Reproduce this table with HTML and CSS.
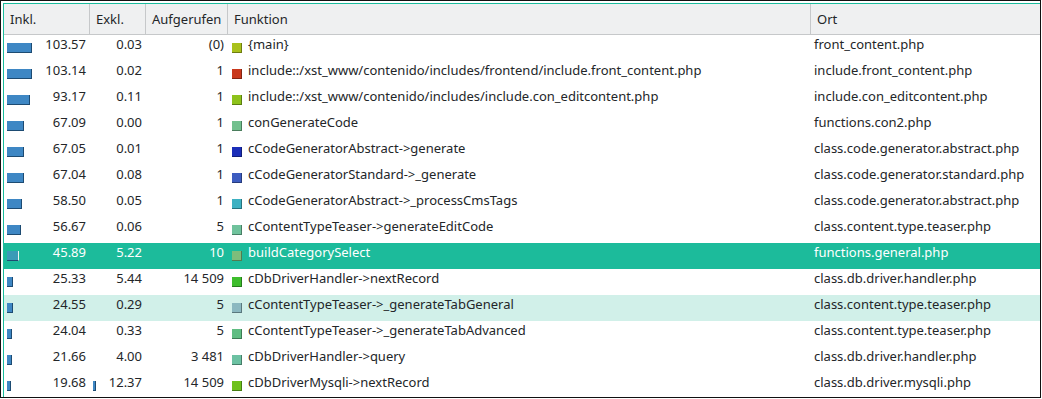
FILE: index.html
```html
<!DOCTYPE html>
<html lang="de">
<head>
    <meta charset="UTF-8">
    <title>Aufrufliste</title>
    <link rel="stylesheet" href="styles.css">
</head>
<body>
    <div class="frame">
        <div class="list">
            <div class="row head">
                <div class="cell">Inkl.</div>
                <div class="cell">Exkl.</div>
                <div class="cell">Aufgerufen</div>
                <div class="cell">Funktion</div>
                <div class="cell">Ort</div>
            </div>

            <div class="row">
                <div class="cell incl"><span class="bar" style="width:25px"></span><span class="num">103.57</span></div>
                <div class="cell num">0.03</div>
                <div class="cell num">(0)</div>
                <div class="cell fn"><span class="sq" style="background:#a9c11b"></span>{main}</div>
                <div class="cell">front_content.php</div>
            </div>
            <div class="row">
                <div class="cell incl"><span class="bar" style="width:25px"></span><span class="num">103.14</span></div>
                <div class="cell num">0.02</div>
                <div class="cell num">1</div>
                <div class="cell fn"><span class="sq" style="background:#c9381c"></span>include::/xst_www/contenido/includes/frontend/include.front_content.php</div>
                <div class="cell">include.front_content.php</div>
            </div>
            <div class="row">
                <div class="cell incl"><span class="bar" style="width:23px"></span><span class="num">93.17</span></div>
                <div class="cell num">0.11</div>
                <div class="cell num">1</div>
                <div class="cell fn"><span class="sq" style="background:#8dc21b"></span>include::/xst_www/contenido/includes/include.con_editcontent.php</div>
                <div class="cell">include.con_editcontent.php</div>
            </div>
            <div class="row">
                <div class="cell incl"><span class="bar" style="width:17px"></span><span class="num">67.09</span></div>
                <div class="cell num">0.00</div>
                <div class="cell num">1</div>
                <div class="cell fn"><span class="sq" style="background:#72c08e"></span>conGenerateCode</div>
                <div class="cell">functions.con2.php</div>
            </div>
            <div class="row">
                <div class="cell incl"><span class="bar" style="width:17px"></span><span class="num">67.05</span></div>
                <div class="cell num">0.01</div>
                <div class="cell num">1</div>
                <div class="cell fn"><span class="sq" style="background:#1b2eb8"></span>cCodeGeneratorAbstract-&gt;generate</div>
                <div class="cell">class.code.generator.abstract.php</div>
            </div>
            <div class="row">
                <div class="cell incl"><span class="bar" style="width:17px"></span><span class="num">67.04</span></div>
                <div class="cell num">0.08</div>
                <div class="cell num">1</div>
                <div class="cell fn"><span class="sq" style="background:#3d5cc0"></span>cCodeGeneratorStandard-&gt;_generate</div>
                <div class="cell">class.code.generator.standard.php</div>
            </div>
            <div class="row">
                <div class="cell incl"><span class="bar" style="width:15px"></span><span class="num">58.50</span></div>
                <div class="cell num">0.05</div>
                <div class="cell num">1</div>
                <div class="cell fn"><span class="sq" style="background:#3db1c2"></span>cCodeGeneratorAbstract-&gt;_processCmsTags</div>
                <div class="cell">class.code.generator.abstract.php</div>
            </div>
            <div class="row">
                <div class="cell incl"><span class="bar" style="width:14px"></span><span class="num">56.67</span></div>
                <div class="cell num">0.06</div>
                <div class="cell num">5</div>
                <div class="cell fn"><span class="sq" style="background:#6fc29c"></span>cContentTypeTeaser-&gt;generateEditCode</div>
                <div class="cell">class.content.type.teaser.php</div>
            </div>
            <div class="row selected">
                <div class="cell incl"><span class="bar" style="width:12px"></span><span class="num">45.89</span></div>
                <div class="cell num">5.22</div>
                <div class="cell num">10</div>
                <div class="cell fn"><span class="sq" style="background:#7dbd7b"></span>buildCategorySelect</div>
                <div class="cell">functions.general.php</div>
            </div>
            <div class="row">
                <div class="cell incl"><span class="bar" style="width:6px"></span><span class="num">25.33</span></div>
                <div class="cell num">5.44</div>
                <div class="cell num">14 509</div>
                <div class="cell fn"><span class="sq" style="background:#3dbd2c"></span>cDbDriverHandler-&gt;nextRecord</div>
                <div class="cell">class.db.driver.handler.php</div>
            </div>
            <div class="row current">
                <div class="cell incl"><span class="bar" style="width:6px"></span><span class="num">24.55</span></div>
                <div class="cell num">0.29</div>
                <div class="cell num">5</div>
                <div class="cell fn"><span class="sq" style="background:#8bb8c0"></span>cContentTypeTeaser-&gt;_generateTabGeneral</div>
                <div class="cell">class.content.type.teaser.php</div>
            </div>
            <div class="row">
                <div class="cell incl"><span class="bar" style="width:5px"></span><span class="num">24.04</span></div>
                <div class="cell num">0.33</div>
                <div class="cell num">5</div>
                <div class="cell fn"><span class="sq" style="background:#5fbd82"></span>cContentTypeTeaser-&gt;_generateTabAdvanced</div>
                <div class="cell">class.content.type.teaser.php</div>
            </div>
            <div class="row">
                <div class="cell incl"><span class="bar" style="width:5px"></span><span class="num">21.66</span></div>
                <div class="cell num">4.00</div>
                <div class="cell num">3 481</div>
                <div class="cell fn"><span class="sq" style="background:#6cc1a2"></span>cDbDriverHandler-&gt;query</div>
                <div class="cell">class.db.driver.handler.php</div>
            </div>
            <div class="row">
                <div class="cell incl"><span class="bar" style="width:4px"></span><span class="num">19.68</span></div>
                <div class="cell incl"><span class="bar" style="width:3px"></span><span class="num">12.37</span></div>
                <div class="cell num">14 509</div>
                <div class="cell fn"><span class="sq" style="background:#6ec11c"></span>cDbDriverMysqli-&gt;nextRecord</div>
                <div class="cell">class.db.driver.mysqli.php</div>
            </div>
        </div>
    </div>
</body>
</html>
```

FILE: styles.css
```css
body {
    margin: 0;
    font-family: "Noto Sans", sans-serif;
    font-size: 13px;
    color: #232629;
    background: #fff;
}
.frame {
    width: 1041px;
    height: 398px;
    border: 1px solid #111;
    padding: 2px 0 0 2px;
    box-sizing: border-box;
    overflow: hidden;
}
.list {
    border-top: 1px solid #1abc9c;
    border-left: 1px solid #1abc9c;
}
.row {
    display: grid;
    grid-template-columns: 86px 56px 82px 583px 1fr;
    height: 26px;
    line-height: 18px;
}
.row .cell {
    white-space: nowrap;
    overflow: hidden;
}
.head {
    height: 30px;
    line-height: 31px;
    background: #eff0f1;
    border-bottom: 1px solid #c6c8ca;
}
.head .cell {
    padding-left: 6px;
    border-right: 1px solid #c6c8ca;
}
.head .cell:last-child {
    border-right: none;
}
.row .cell:last-child {
    padding-left: 3px;
}
.head .cell:last-child {
    padding-left: 6px;
}
.num {
    text-align: right;
    padding-right: 4px;
}
.incl {
    display: flex;
    padding-left: 3px;
    padding-right: 4px;
}
.incl .num {
    margin-left: auto;
    padding-right: 0;
}
.bar {
    display: block;
    height: 10px;
    margin-top: 8px;
    box-sizing: border-box;
    background: #3e87c4;
    border-right: 1px solid #1d4b72;
    border-bottom: 1px solid #1d4b72;
}
.fn {
    display: flex;
    padding-left: 4px;
}
.sq {
    display: block;
    flex: none;
    width: 10px;
    height: 10px;
    margin-top: 8px;
    margin-right: 6px;
    box-sizing: border-box;
    border-right: 1px solid rgba(0,0,0,0.35);
    border-bottom: 1px solid rgba(0,0,0,0.35);
}
.selected {
    background: #1cbb9b;
    color: #fff;
}
.selected .bar {
    background: #3a9bb7;
    border-right-color: #eaf6f2;
}
.current {
    background: #d1f0e9;
}
```
